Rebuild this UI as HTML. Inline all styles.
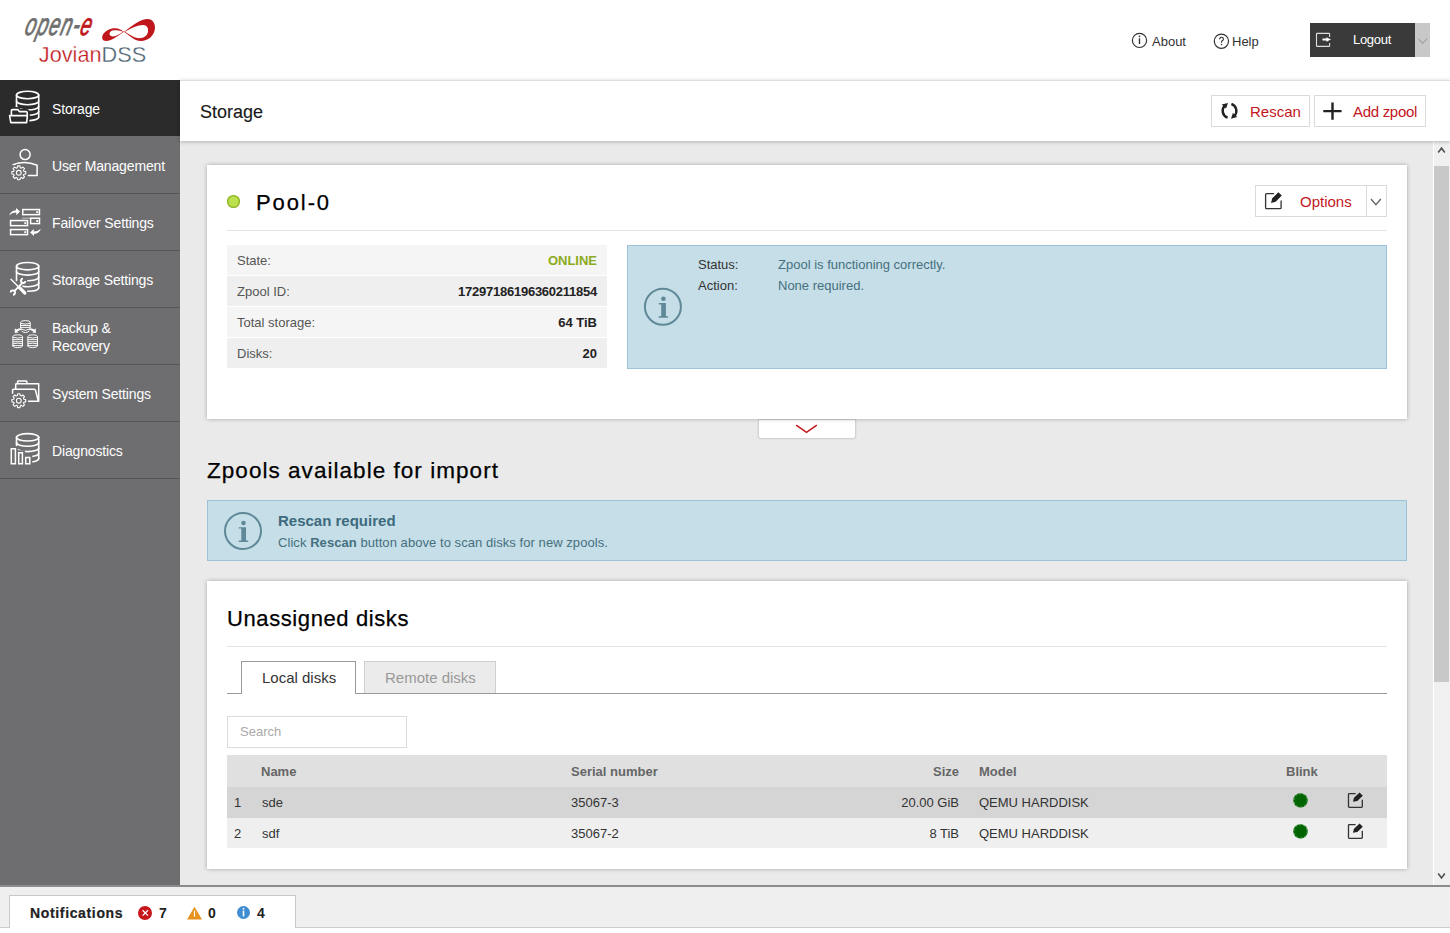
<!DOCTYPE html>
<html><head><meta charset="utf-8">
<style>
*{box-sizing:border-box;margin:0;padding:0}
html,body{width:1450px;height:933px;overflow:hidden;background:#fff;font-family:"Liberation Sans",sans-serif;color:#333}
.a{position:absolute;white-space:nowrap}
.t13{font-size:13px;line-height:15px}
.t15{font-size:15px;line-height:17px}
.nav{position:absolute;left:0;width:180px;color:#fff;font-size:14px;line-height:18px;letter-spacing:-0.15px}
.line{position:absolute;left:0;width:180px;height:1px;background:#555558}
.card{position:absolute;background:#fff;box-shadow:0 0 4px rgba(0,0,0,.3)}
.btn{position:absolute;border:1px solid #dadada;background:#fff}
.red{color:#c4161c}
.row{position:absolute;left:227px;width:380px;height:30px}
.lbl{color:#555}
.val{font-weight:bold;color:#222;text-align:right}
.th{font-weight:bold;color:#666}
</style></head><body>

<!-- HEADER -->
<div class="a t13" style="left:1152px;top:34px">About</div>
<div class="a t13" style="left:1232px;top:34px">Help</div>
<div class="a" style="left:1310px;top:23px;width:105px;height:34px;background:#3a3a3a"></div>
<div class="a" style="left:1415px;top:23px;width:15px;height:34px;background:#c8c8c8"></div>
<div class="a t13" style="left:1353px;top:32px;color:#fff;letter-spacing:-0.3px">Logout</div>

<svg class="a" style="left:0;top:0" width="180" height="80" viewBox="0 0 180 80">
<g transform="translate(23.5,35) skewX(-15) scale(0.62,1)">
<text x="0" y="0" font-family="Liberation Sans" font-style="italic" font-size="31" letter-spacing="2" fill="#6f6f70" stroke="#6f6f70" stroke-width="0.9">open-<tspan fill="#c0171c" stroke="#c0171c">e</tspan></text>
</g>
<path fill="#c0171c" fill-rule="evenodd" d="M124,31.8C131,27 139,19.5 147,19C153,18.8 155.5,24 154.9,29C154,36 148,41 141,41C134,41 128,34.5 124,31.8C119,35 112,41 106,41C102.5,41 101.5,38 102.5,35.5C104.5,31 110,28.3 115,28.3C119,28.3 122,30.5 124,31.8Z M125,31.8C131,28.3 138,25 143,25C147,25 148.5,28 148,31.5C147.5,35.5 144,38.2 139,38.2C134,38.2 129,34.2 125,31.8Z M123,31.8C120,30.6 117,30.2 114.5,30.2C111,30.2 109.4,32.3 109.5,34C109.6,35.6 111,36.4 113,36.4C116,36.4 119.5,34 123,31.8Z"/>
<text x="38.8" y="61.8" font-family="Liberation Sans" font-size="22" textLength="107.4" lengthAdjust="spacingAndGlyphs" fill="#c0171c" stroke="#fff" stroke-width="0.3">Jovian<tspan fill="#4b6170">DSS</tspan></text>
</svg>
<svg class="a" style="left:1120px;top:20px" width="320" height="45" viewBox="1120 20 320 45" fill="none">
<circle cx="1139.5" cy="40.4" r="7.1" stroke="#333" stroke-width="1.2"/>
<path d="M1139.5,38.3V44" stroke="#333" stroke-width="1.4"/>
<circle cx="1139.5" cy="36.3" r="0.85" fill="#333"/>
<circle cx="1221.4" cy="41.2" r="7.1" stroke="#333" stroke-width="1.2"/>
<path d="M1219.6,39.3Q1219.6,37.2 1221.5,37.2Q1223.4,37.2 1223.4,38.9Q1223.4,39.9 1222.5,40.5Q1221.5,41.2 1221.5,42.3V42.7" stroke="#333" stroke-width="1.15"/>
<circle cx="1221.5" cy="44.6" r="0.75" fill="#333"/>
<path d="M1323.5,33.4H1317.2Q1316.5,33.4 1316.5,34.1V45.7Q1316.5,46.4 1317.2,46.4H1328.9Q1329.6,46.4 1329.6,45.7V42.9M1329.6,37V34.1Q1329.6,33.4 1328.9,33.4H1323.5" stroke="#ddd" stroke-width="1.1"/>
<path d="M1322.5,38.5H1326.4V37.2L1331,39.5L1326.4,41.8V40.5H1322.5Z" fill="#fff"/>
<path d="M1418.2,38.6L1422.6,43.4L1427,38.6" stroke="#8c8c8c" stroke-width="1"/>
</svg>

<!-- SIDEBAR -->
<div class="a" style="left:0;top:80px;width:180px;height:805px;background:#6e6e70"></div>
<div class="a" style="left:0;top:80px;width:180px;height:56px;background:#2b2b2b"></div>
<div class="line" style="top:193px"></div>
<div class="line" style="top:250px"></div>
<div class="line" style="top:307px"></div>
<div class="line" style="top:364px"></div>
<div class="line" style="top:421px"></div>
<div class="line" style="top:478px"></div>
<div class="nav" style="left:52px;top:100px;width:auto">Storage</div>
<div class="nav" style="left:52px;top:157px;width:auto">User Management</div>
<div class="nav" style="left:52px;top:214px;width:auto">Failover Settings</div>
<div class="nav" style="left:52px;top:271px;width:auto">Storage Settings</div>
<div class="nav" style="left:52px;top:319px;width:auto">Backup &amp;<br>Recovery</div>
<div class="nav" style="left:52px;top:385px;width:auto">System Settings</div>
<div class="nav" style="left:52px;top:442px;width:auto">Diagnostics</div>

<svg class="a" style="left:0;top:80px" width="50" height="400" viewBox="0 80 50 400" fill="none" stroke="#fff" stroke-width="1.6" stroke-linecap="round" stroke-linejoin="round">
<!-- Storage -->
<g>
<ellipse cx="27.6" cy="95" rx="11.1" ry="3.7"/>
<path d="M16.5,95V107M38.7,95V117"/>
<path d="M16.5,101A11.1,3.7 0 0 0 38.7,101"/>
<path d="M16.5,106.3A11.1,3.7 0 0 0 38.7,106.3"/>
<path d="M16.5,111.6A11.1,3.7 0 0 0 38.7,111.6"/>
<path d="M16.5,117A11.1,3.7 0 0 0 38.7,117"/>
<path d="M11.4,115V110.6Q11.4,109.6 12.4,109.6H17.8L19.3,111.6H26.2Q27.2,111.6 27.2,112.6V115M9.6,115.6H27.4L26.6,122.6H10.8Z" stroke="#2b2b2b" stroke-width="5" fill="#2b2b2b"/>
<path d="M11.4,115V110.6Q11.4,109.6 12.4,109.6H17.8L19.3,111.6H26.2Q27.2,111.6 27.2,112.6V115M9.6,115.6H27.4L26.6,122.6H10.8Z" fill="#2b2b2b"/>
</g>
<!-- User Management -->
<g stroke-width="1.5">
<circle cx="25.1" cy="154.6" r="5"/>
<path d="M13.2,164.7Q25,160 37.1,165.2V175.6H28.4"/>
<path d="M17.31,167.71 L17.65,165.89 L19.95,165.89 L20.29,167.71 L21.34,168.15 L22.87,167.10 L24.50,168.73 L23.45,170.26 L23.89,171.31 L25.71,171.65 L25.71,173.95 L23.89,174.29 L23.45,175.34 L24.50,176.87 L22.87,178.50 L21.34,177.45 L20.29,177.89 L19.95,179.71 L17.65,179.71 L17.31,177.89 L16.26,177.45 L14.73,178.50 L13.10,176.87 L14.15,175.34 L13.71,174.29 L11.89,173.95 L11.89,171.65 L13.71,171.31 L14.15,170.26 L13.10,168.73 L14.73,167.10 L16.26,168.15Z" stroke="#6e6e70" stroke-width="4" fill="#6e6e70"/>
<path d="M17.31,167.71 L17.65,165.89 L19.95,165.89 L20.29,167.71 L21.34,168.15 L22.87,167.10 L24.50,168.73 L23.45,170.26 L23.89,171.31 L25.71,171.65 L25.71,173.95 L23.89,174.29 L23.45,175.34 L24.50,176.87 L22.87,178.50 L21.34,177.45 L20.29,177.89 L19.95,179.71 L17.65,179.71 L17.31,177.89 L16.26,177.45 L14.73,178.50 L13.10,176.87 L14.15,175.34 L13.71,174.29 L11.89,173.95 L11.89,171.65 L13.71,171.31 L14.15,170.26 L13.10,168.73 L14.73,167.10 L16.26,168.15Z" stroke-width="1.1"/>
<circle cx="18.8" cy="172.8" r="2.4" stroke-width="1.1"/>
</g>
<!-- Failover -->
<g stroke-width="1.5" stroke-linecap="butt" stroke-linejoin="miter">
<path d="M21.8,218.2H30.6" stroke-width="1" opacity="0.6"/>
<rect x="30.6" y="218.2" width="8.9" height="5.4"/>
<rect x="22.75" y="209.55" width="16.7" height="5.1"/>
<rect x="10.55" y="220.55" width="17" height="5.1"/>
<rect x="10.55" y="229.55" width="17" height="5.1"/>
<g fill="#fff" stroke="none">
<rect x="36.2" y="211.2" width="1.9" height="1.9"/>
<rect x="36.2" y="220" width="1.9" height="1.9"/>
<rect x="24.3" y="222.2" width="1.9" height="1.9"/>
<rect x="24.3" y="231.2" width="1.9" height="1.9"/>
<path d="M9.2,215.4Q10.8,210.6 16,210.2V207.9L20,211.6L16.3,215.2V212.6Q12,212.4 9.2,215.4Z"/>
<path d="M40.9,228.8Q39.3,233.6 34,233.9V236.1L30.1,232.4L33.8,229.1V231.6Q38,231.6 40.9,228.8Z"/>
</g>
</g>
<!-- Storage Settings -->
<g>
<ellipse cx="27.6" cy="266.2" rx="11.1" ry="3.7"/>
<path d="M16.5,266.2V280.5M38.7,266.2V288"/>
<path d="M16.5,271.4A11.1,3.7 0 0 0 38.7,271.4"/>
<path d="M25,280.6A11.1,3.7 0 0 0 38.7,277"/>
<path d="M22,286.1A11.1,3.7 0 0 0 38.7,282.4"/>
<path d="M27.5,291.3A11.1,3.7 0 0 0 38.7,288"/>
<g stroke="#6e6e70" stroke-width="3.6">
<path d="M11,279.2L19.2,287.4"/>
<path d="M19.5,287.7L24.8,293" stroke-width="5.6"/>
<path d="M14.3,291.1L21.7,283.7"/>
<path d="M25.39,280.99A2.2,2.2 0 1 1 23.01,278.61" stroke-width="4"/>
<path d="M10.61,292.41A2.2,2.2 0 1 1 12.99,294.79" stroke-width="4"/>
</g>
<g stroke-width="1.4">
<path d="M11,279.2L19.2,287.4"/>
<path d="M19.5,287.7L24.8,293" stroke-width="3.2"/>
<path d="M14.3,291.1L21.7,283.7" stroke-width="1.9"/>
<path d="M25.39,280.99A2.2,2.2 0 1 1 23.01,278.61" stroke-width="1.9" stroke-linecap="butt"/>
<path d="M10.61,292.41A2.2,2.2 0 1 1 12.99,294.79" stroke-width="1.9" stroke-linecap="butt"/>
</g>
</g>
<!-- Backup & Recovery -->
<g stroke-width="0.95">
<path d="M20.6,327.6V322.2Q20.6,320.6 25.4,320.6Q30.2,320.6 30.2,322.2V327.6"/>
<path d="M20.6,323.4Q25.4,325 30.2,323.4M20.6,325.5H30.2M20.6,327.4H30.2"/>
<path d="M21.8,331.2Q25.4,334.2 29,331.2M22.2,329.4Q25.4,331.5 28.6,329.4"/>
<path fill="#fff" stroke="none" d="M14.8,328.2V333L18.3,332.6L17.3,331.4Q20,329.6 22.2,329.9L21.4,328.3Q18.8,328.3 16.2,329.6Z"/>
<path fill="#fff" stroke="none" d="M35.8,328.2V333L32.3,332.6L33.3,331.4Q30.6,329.6 28.4,329.9L29.2,328.3Q31.8,328.3 34.4,329.6Z"/>
<path d="M12.9,345.8V336.4Q12.9,334.8 17.7,334.8Q22.5,334.8 22.5,336.4V345.8Q22.5,347.6 17.7,347.6Q12.9,347.6 12.9,345.8Z"/>
<path d="M12.9,337.3Q17.7,338.9 22.5,337.3M12.9,339.6H22.5M12.9,341.7H22.5M12.9,343.8Q17.7,342.4 22.5,343.8M12.9,345.6H22.5"/>
<path d="M27.9,345.8V336.4Q27.9,334.8 32.7,334.8Q37.5,334.8 37.5,336.4V345.8Q37.5,347.6 32.7,347.6Q27.9,347.6 27.9,345.8Z"/>
<path d="M27.9,337.3Q32.7,338.9 37.5,337.3M27.9,339.6H37.5M27.9,341.7H37.5M27.9,343.8Q32.7,342.4 37.5,343.8M27.9,345.6H37.5"/>
</g>
<!-- System Settings -->
<g stroke-width="1.5">
<path d="M17.6,383.6V381.6Q17.6,380.9 18.4,380.9H26Q26.8,380.9 26.8,381.6V383.6"/>
<path d="M15.7,389V384.4Q15.7,383.7 16.5,383.7H38.7V401.2H28.3"/>
<path d="M12.6,393.6V390Q12.6,389.2 13.6,389.2H34.3Q35.2,389.2 35.5,390.2L38.3,401"/>
<path d="M17.31,395.61 L17.65,393.79 L19.95,393.79 L20.29,395.61 L21.34,396.05 L22.87,395.00 L24.50,396.63 L23.45,398.16 L23.89,399.21 L25.71,399.55 L25.71,401.85 L23.89,402.19 L23.45,403.24 L24.50,404.77 L22.87,406.40 L21.34,405.35 L20.29,405.79 L19.95,407.61 L17.65,407.61 L17.31,405.79 L16.26,405.35 L14.73,406.40 L13.10,404.77 L14.15,403.24 L13.71,402.19 L11.89,401.85 L11.89,399.55 L13.71,399.21 L14.15,398.16 L13.10,396.63 L14.73,395.00 L16.26,396.05Z" stroke="#6e6e70" stroke-width="4" fill="#6e6e70"/>
<path d="M17.31,395.61 L17.65,393.79 L19.95,393.79 L20.29,395.61 L21.34,396.05 L22.87,395.00 L24.50,396.63 L23.45,398.16 L23.89,399.21 L25.71,399.55 L25.71,401.85 L23.89,402.19 L23.45,403.24 L24.50,404.77 L22.87,406.40 L21.34,405.35 L20.29,405.79 L19.95,407.61 L17.65,407.61 L17.31,405.79 L16.26,405.35 L14.73,406.40 L13.10,404.77 L14.15,403.24 L13.71,402.19 L11.89,401.85 L11.89,399.55 L13.71,399.21 L14.15,398.16 L13.10,396.63 L14.73,395.00 L16.26,396.05Z" stroke-width="1.1"/>
<circle cx="18.8" cy="400.7" r="2.4" stroke-width="1.1"/>
</g>
<!-- Diagnostics -->
<g>
<ellipse cx="27.6" cy="437.3" rx="11.1" ry="3.7"/>
<path d="M16.5,437.3V445.8M38.7,437.3V458.8"/>
<path d="M16.5,442.6A11.1,3.7 0 0 0 38.7,442.6"/>
<path d="M16.5,447.9A11.1,3.7 0 0 0 38.7,447.9"/>
<path d="M16.5,453.2A11.1,3.7 0 0 0 38.7,453.2"/>
<path d="M16.5,458.6A11.1,3.7 0 0 0 38.7,458.6"/>
<g stroke-width="1.5" stroke-linecap="butt" stroke-linejoin="miter">
<path d="M11.3,448.8h4.1v15h-4.1zM18.7,452.8h3.7v11h-3.7zM25.7,457.6h4.1v6.2h-4.1z" stroke="#6e6e70" stroke-width="5" fill="#6e6e70"/>
<path d="M11.3,448.8h4.1v15h-4.1zM18.7,452.8h3.7v11h-3.7zM25.7,457.6h4.1v6.2h-4.1z"/>
</g>
</g>
</svg>

<!-- CONTENT BG -->
<div class="a" style="left:180px;top:141px;width:1270px;height:744px;background:#eaeaea"></div>

<!-- TITLE BAR -->
<div class="a" style="left:180px;top:80px;width:1270px;height:61px;background:#fff;border-top:1px solid #dedede;box-shadow:0 1px 4px rgba(0,0,0,.25);z-index:2"></div>
<div class="a" style="left:200px;top:102px;font-size:18px;line-height:20px;color:#1a1a1a;-webkit-text-stroke:0.15px #1a1a1a;z-index:3">Storage</div>
<div class="btn" style="left:1211px;top:95px;width:99px;height:32px;z-index:3"></div>
<div class="btn" style="left:1314px;top:95px;width:112px;height:32px;z-index:3"></div>
<div class="a t15 red" style="left:1250px;top:103px;z-index:3">Rescan</div>
<div class="a t15 red" style="left:1353px;top:103px;z-index:3;letter-spacing:-0.3px">Add zpool</div>

<!-- POOL CARD -->
<div class="a" style="left:758px;top:419px;width:98px;height:20px;background:#fff;border:1px solid #d3d3d3;border-radius:0 0 3px 3px;box-shadow:0 0 2px rgba(0,0,0,.12)"></div>
<div class="card" style="left:207px;top:165px;width:1200px;height:254px"></div>
<svg class="a" style="left:225px;top:193px" width="17" height="17"><circle cx="8.5" cy="8.5" r="5.9" fill="#bde04e" stroke="#8cb423" stroke-width="1.4"/></svg>
<div class="a" style="left:256px;top:190px;font-size:22px;line-height:26px;letter-spacing:1.9px;color:#000;-webkit-text-stroke:0.25px #000">Pool-0</div>
<div class="a" style="left:227px;top:230px;width:1160px;height:1px;background:#e6e6e6"></div>
<div class="btn" style="left:1255px;top:185px;width:132px;height:32px"></div>
<div class="a" style="left:1366px;top:186px;width:1px;height:30px;background:#dadada"></div>
<div class="a t15 red" style="left:1300px;top:193px">Options</div>

<div class="row" style="top:245px;background:#f5f5f5"></div>
<div class="row" style="top:276px;background:#efefef"></div>
<div class="row" style="top:307px;background:#f5f5f5"></div>
<div class="row" style="top:338px;background:#efefef"></div>
<div class="a t13 lbl" style="left:237px;top:253px">State:</div>
<div class="a t13 lbl" style="left:237px;top:284px">Zpool ID:</div>
<div class="a t13 lbl" style="left:237px;top:315px">Total storage:</div>
<div class="a t13 lbl" style="left:237px;top:346px">Disks:</div>
<div class="a t13 val" style="right:853px;top:253px;color:#8cab1e">ONLINE</div>
<div class="a t13 val" style="right:853px;top:284px;letter-spacing:-0.25px">17297186196360211854</div>
<div class="a t13 val" style="right:853px;top:315px">64 TiB</div>
<div class="a t13 val" style="right:853px;top:346px">20</div>

<div class="a" style="left:627px;top:245px;width:760px;height:124px;background:#c6dee7;border:1px solid #9cc3d5"></div>
<div class="a t13" style="left:698px;top:257px;color:#333">Status:</div>
<div class="a t13" style="left:698px;top:278px;color:#333">Action:</div>
<div class="a t13" style="left:778px;top:257px;color:#45707f">Zpool is functioning correctly.</div>
<div class="a t13" style="left:778px;top:278px;color:#45707f">None required.</div>


<!-- ZPOOLS IMPORT -->
<div class="a" style="left:207px;top:458px;font-size:22.5px;line-height:26px;letter-spacing:1.04px;color:#000;-webkit-text-stroke:0.25px #000">Zpools available for import</div>
<div class="a" style="left:207px;top:500px;width:1200px;height:61px;background:#c6dee7;border:1px solid #9cc3d5"></div>
<div class="a t15" style="left:278px;top:512px;font-weight:bold;color:#3d6a7d">Rescan required</div>
<div class="a t13" style="left:278px;top:535px;color:#45707f;letter-spacing:0.06px">Click <b>Rescan</b> button above to scan disks for new zpools.</div>

<!-- UNASSIGNED CARD -->
<div class="card" style="left:207px;top:581px;width:1200px;height:288px"></div>
<div class="a" style="left:227px;top:606px;font-size:22px;line-height:26px;letter-spacing:0.6px;color:#000;-webkit-text-stroke:0.25px #000">Unassigned disks</div>
<div class="a" style="left:227px;top:646px;width:1160px;height:1px;background:#e6e6e6"></div>
<div class="a" style="left:227px;top:693px;width:1160px;height:1px;background:#999"></div>
<div class="a" style="left:364px;top:661px;width:132px;height:32px;background:#ebebeb;border:1px solid #cfcfcf;border-bottom:none"></div>
<div class="a" style="left:241px;top:661px;width:115px;height:33px;background:#fff;border:1px solid #999;border-bottom:none"></div>
<div class="a t15" style="left:262px;top:669px;color:#333">Local disks</div>
<div class="a t15" style="left:385px;top:669px;color:#999">Remote disks</div>
<div class="a" style="left:227px;top:716px;width:180px;height:32px;border:1px solid #dcdcdc"></div>
<div class="a t13" style="left:240px;top:724px;color:#aaa">Search</div>

<div class="a" style="left:227px;top:755px;width:1160px;height:32px;background:#e0e0e0"></div>
<div class="a" style="left:227px;top:787px;width:1160px;height:31px;background:#d5d5d5"></div>
<div class="a" style="left:227px;top:818px;width:1160px;height:30px;background:#efefef"></div>
<div class="a t13 th" style="left:261px;top:764px">Name</div>
<div class="a t13 th" style="left:571px;top:764px">Serial number</div>
<div class="a t13 th" style="right:491px;top:764px">Size</div>
<div class="a t13 th" style="left:979px;top:764px">Model</div>
<div class="a t13 th" style="left:1286px;top:764px">Blink</div>
<div class="a t13" style="left:234px;top:795px">1</div>
<div class="a t13" style="left:262px;top:795px">sde</div>
<div class="a t13" style="left:571px;top:795px">35067-3</div>
<div class="a t13" style="right:491px;top:795px">20.00 GiB</div>
<div class="a t13" style="left:979px;top:795px">QEMU HARDDISK</div>
<div class="a t13" style="left:234px;top:826px">2</div>
<div class="a t13" style="left:262px;top:826px">sdf</div>
<div class="a t13" style="left:571px;top:826px">35067-2</div>
<div class="a t13" style="right:491px;top:826px">8 TiB</div>
<div class="a t13" style="left:979px;top:826px">QEMU HARDDISK</div>
<svg class="a" style="left:1291px;top:791px" width="19" height="19"><circle cx="9.5" cy="9.4" r="7.2" fill="#006400"/><circle cx="9.5" cy="9.4" r="6.6" fill="none" stroke="#5aa85a" stroke-width="1" stroke-dasharray="2.2 2"/></svg>
<svg class="a" style="left:1291px;top:822px" width="19" height="19"><circle cx="9.5" cy="9.4" r="7.2" fill="#006400"/><circle cx="9.5" cy="9.4" r="6.6" fill="none" stroke="#5aa85a" stroke-width="1" stroke-dasharray="2.2 2"/></svg>

<!-- SCROLLBAR -->
<div class="a" style="left:1433px;top:141px;width:1px;height:744px;background:#fff"></div>
<div class="a" style="left:1434px;top:141px;width:16px;height:744px;background:#f0f0f0"></div>
<div class="a" style="left:1434px;top:166px;width:15px;height:516px;background:#c8c8c8"></div>

<!-- FOOTER -->
<div class="a" style="left:0;top:885px;width:1450px;height:2px;background:#8c8c8c"></div>
<div class="a" style="left:0;top:887px;width:1450px;height:41px;background:#efefef;border-bottom:1px solid #cccccc"></div>
<div class="a" style="left:0;top:928px;width:1450px;height:5px;background:#fff"></div>
<div class="a" style="left:9px;top:895px;width:287px;height:33px;background:#fff;border:1px solid #c8c8c8;border-bottom:none"></div>
<div class="a" style="left:30px;top:905px;font-size:14px;line-height:16px;font-weight:bold;letter-spacing:0.65px;color:#222;-webkit-text-stroke:0.2px #222">Notifications</div>
<div class="a" style="left:138px;top:906px;width:14px;height:14px;border-radius:50%;background:#c8161d"></div>
<div class="a" style="left:159px;top:905px;font-size:14px;line-height:16px;font-weight:bold;color:#222">7</div>
<div class="a" style="left:208px;top:905px;font-size:14px;line-height:16px;font-weight:bold;color:#222">0</div>
<div class="a" style="left:237px;top:906px;width:13px;height:13px;border-radius:50%;background:#3e8dd2"></div>
<div class="a" style="left:257px;top:905px;font-size:14px;line-height:16px;font-weight:bold;color:#222">4</div>

<svg class="a" style="left:0;top:0;z-index:5" width="1450" height="933" viewBox="0 0 1450 933" fill="none">
<!-- rescan icon -->
<g stroke="#222" stroke-width="2.4" stroke-linecap="butt">
<path d="M1227.6,117.6A7.2,7.2 0 0 1 1224.8,105.6"/>
<path d="M1231.4,104A7.2,7.2 0 0 1 1234.2,116"/>
</g>
<path d="M1221.7,104.5L1228,102.9L1226,108.6Z" fill="#222"/>
<path d="M1237.2,117.1L1231,118.7L1232.9,113Z" fill="#222"/>
<!-- plus -->
<path d="M1332.5,102.4V119.8M1323.3,111.1H1341.6" stroke="#222" stroke-width="2.4"/>
<!-- options edit icon -->
<path d="M1274,193.6H1266.6Q1265.6,193.6 1265.6,194.6V207.7Q1265.6,208.7 1266.6,208.7H1280.1Q1281.1,208.7 1281.1,207.7V200.4" stroke="#333" stroke-width="1.3"/>
<path d="M1271,202.9L1272.3,198.3L1278.4,192.2L1281.8,195.6L1275.7,201.7Z" fill="#222"/>
<path d="M1371,199L1375.9,204.6L1380.8,199" stroke="#666" stroke-width="1.4"/>
<!-- info icon pool -->
<circle cx="662.9" cy="306.8" r="18" stroke="#5f8898" stroke-width="2"/>
<circle cx="663.4" cy="298.8" r="2.3" fill="#5f8898"/>
<path d="M658.7,303H665.9V316.3H668.1V317.7H658.7V316.3H661.2V304.4H658.7Z" fill="#5f8898"/>
<!-- collapse chevron -->
<path d="M796.2,425.1L806.5,432.4L816.8,425.1" stroke="#c4161c" stroke-width="1.5"/>
<!-- info icon alert -->
<circle cx="243" cy="531" r="18" stroke="#5f8898" stroke-width="2"/>
<circle cx="243.5" cy="523" r="2.3" fill="#5f8898"/>
<path d="M238.8,527.2H246V540.5H248.2V541.9H238.8V540.5H241.3V528.6H238.8Z" fill="#5f8898"/>
<!-- table edit icons -->
<g stroke="#333" stroke-width="1.3">
<path d="M1355.6,793.7H1349.2Q1348.5,793.7 1348.5,794.4V806.6Q1348.5,807.3 1349.2,807.3H1361.6Q1362.3,807.3 1362.3,806.6V799.8"/>
<path d="M1355.6,824.7H1349.2Q1348.5,824.7 1348.5,825.4V837.6Q1348.5,838.3 1349.2,838.3H1361.6Q1362.3,838.3 1362.3,837.6V830.8"/>
</g>
<path d="M1352.9,801.8L1354,797.8L1359.6,792.6L1362.8,795.7L1357.3,800.9Z" fill="#222"/>
<path d="M1352.9,832.8L1354,828.8L1359.6,823.6L1362.8,826.7L1357.3,831.9Z" fill="#222"/>
<!-- scrollbar arrows -->
<path d="M1438.2,152.6L1441.5,148.2L1444.8,152.6" stroke="#505050" stroke-width="1.6"/>
<path d="M1438.2,873.6L1441.5,878L1444.8,873.6" stroke="#505050" stroke-width="1.6"/>
<!-- notifications icons -->
<path d="M142.6,910.2L148,915.6M148,910.2L142.6,915.6" stroke="#fff" stroke-width="1.3"/>
<path d="M194.5,906.8L202,919.6H187Z" fill="#e8921e"/>
<path d="M194.5,910.6V916.6" stroke="#fff" stroke-width="1.2"/>
<path d="M243.5,910.6V916.4" stroke="#fff" stroke-width="1.6"/>
<circle cx="243.5" cy="908.8" r="0.9" fill="#fff"/>
</svg>

</body></html>
